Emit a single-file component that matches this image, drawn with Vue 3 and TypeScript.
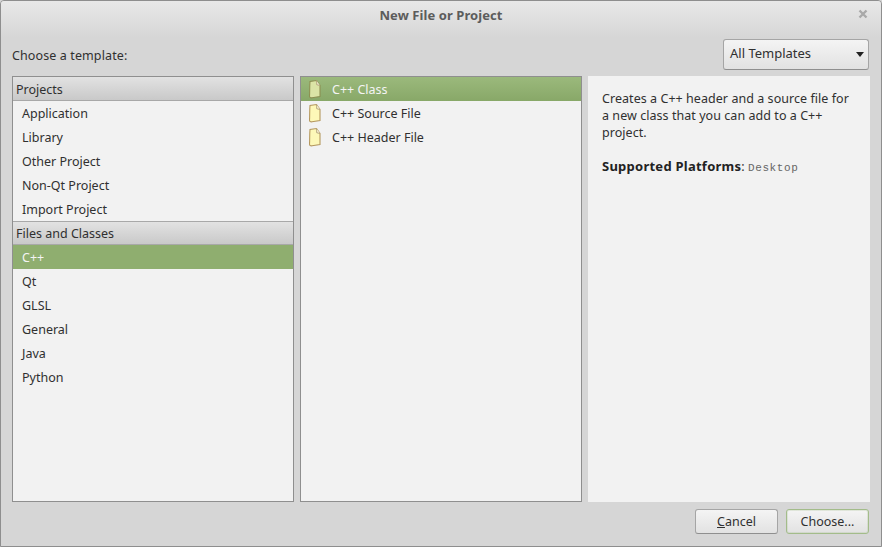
<script setup lang="ts">
const projects = ['Application', 'Library', 'Other Project', 'Non-Qt Project', 'Import Project']
const classes = ['C++', 'Qt', 'GLSL', 'General', 'Java', 'Python']
const files = ['C++ Class', 'C++ Source File', 'C++ Header File']
</script>

<template>
  <div class="window">
    <header class="titlebar">
      <span class="title">New File or Project</span>
      <svg class="close" width="10" height="10" viewBox="0 0 10 10">
        <path d="M1.5 1.500 8.500 8.500M8.500 1.500 1.500 8.500" stroke="#a9a9a9" stroke-width="2.400" fill="none" />
      </svg>
    </header>
    <div class="top">
      <span class="choose">Choose a template:</span>
      <div class="combo">
        <span>All Templates</span>
        <i class="arrow"></i>
      </div>
    </div>
    <div class="panes">
      <div class="pane list">
        <div class="group first">Projects</div>
        <div v-for="p in projects" :key="p" class="item">{{ p }}</div>
        <div class="group">Files and Classes</div>
        <div v-for="c in classes" :key="c" class="item" :class="{ selected: c === 'C++' }">{{ c }}</div>
      </div>
      <div class="pane list">
        <div v-for="(f, i) in files" :key="f" class="file" :class="{ selected: i === 0 }">
          <svg width="14" height="20" viewBox="0 0 14 20">
            <path d="M2 2.500C1.500 8 1.800 14 1.500 17c0 1.500 1 2 2.500 1.800L12 17.500V6.500L8.500 1.500z" :fill="i === 0 ? '#dbe4a6' : '#fdf8b8'" :stroke="i === 0 ? '#8c8f52' : '#b5985f'" stroke-width="1.100" />
            <path d="M8.500 1.500c.3 1.800.2 3.200.2 4.200 1.100.3 2.200.5 3.300.8" :fill="i === 0 ? '#eef0d4' : '#fbf6dc'" stroke="#b5a67c" stroke-width="1" />
          </svg>
          <span>{{ f }}</span>
        </div>
      </div>
      <div class="desc">
        <p>Creates a C++ header and a source file for a new class that you can add to a C++ project.</p>
        <p class="platforms"><b>Supported Platforms</b>: <span class="mono">Desktop</span></p>
      </div>
    </div>
    <footer class="footer">
      <button class="btn cancel"><u>C</u>ancel</button>
      <button class="btn choose-btn">Choose...</button>
    </footer>
  </div>
</template>

<style>
html, body { margin: 0; padding: 0; background: #d6d6d6; }
</style>

<style scoped>
.window {
  box-sizing: border-box;
  width: 882px;
  height: 547px;
  display: flex;
  flex-direction: column;
  background: #d6d6d6;
  border: 1px solid #8e8e8e;
  border-radius: 4px 4px 0 0;
  font-family: "Noto Sans", "Open Sans", sans-serif;
  font-size: 12.5px;
  color: #303030;
  overflow: hidden;
}
.titlebar {
  box-sizing: border-box;
  height: 36px;
  flex: none;
  display: flex;
  align-items: center;
  justify-content: center;
  padding-bottom: 9px;
  position: relative;
  background: linear-gradient(#e8e8e8, #d6d6d6);
}
.title { font-weight: 700; font-size: 13px; letter-spacing: 0.08px; color: #5c5c5c; }
.close { position: absolute; right: 13px; top: 8px; }
.top {
  box-sizing: border-box;
  height: 39px;
  flex: none;
  display: flex;
  align-items: center;
  justify-content: space-between;
  padding: 0 12px 0 11px;
}
.choose { letter-spacing: 0.11px; margin-top: -2px; }
.combo {
  box-sizing: border-box;
  width: 146px;
  height: 31px;
  margin-top: -5px;
  display: flex;
  align-items: center;
  justify-content: space-between;
  padding: 0 4px 0 6px;
  font-size: 13px;
  border: 1px solid #a5a5a5;
  border-bottom-color: #8f8f8f;
  border-radius: 3px;
  background: linear-gradient(#f4f4f4, #e2e2e2);
}
.combo span { margin-top: -2px; }
.arrow {
  width: 0;
  height: 0;
  border-left: 4.500px solid transparent;
  border-right: 4.500px solid transparent;
  border-top: 5px solid #222;
  margin-top: 1px;
}
.panes {
  flex: none;
  height: 426px;
  display: grid;
  grid-template-columns: 282px 282px 282px;
  gap: 6px;
  padding-left: 11px;
}
.pane {
  box-sizing: border-box;
  background: #f2f2f2;
  border: 1px solid #8f8f8f;
}
.group {
  box-sizing: border-box;
  height: 24px;
  line-height: 23px;
  padding-left: 3px;
  background: linear-gradient(#e2e2e2, #c9c9c9);
  border-top: 1px solid #a8a8a8;
  border-bottom: 1px solid #a8a8a8;
}
.group.first { border-top: 0; line-height: 25px; }
.item {
  height: 24px;
  line-height: 26px;
  padding-left: 9px;
}
.selected {
  background: #8fae6f;
  color: #f4f4f4;
}
.file {
  height: 24px;
  display: flex;
  align-items: center;
  padding-left: 7px;
  gap: 10px;
}
.file.selected {
  background: linear-gradient(#9bb97c, #88a868);
}
.desc {
  box-sizing: border-box;
  background: #f2f2f2;
  padding: 14px 14px;
  line-height: 17px;
  letter-spacing: 0.05px;
}
.desc p { margin: 0; }
.platforms { margin-top: 17px !important; }
.desc b { color: #222; font-size: 13px; letter-spacing: 0.25px; }
.mono { font-family: "Liberation Mono", monospace; font-size: 11px; letter-spacing: 0.6px; color: #666; }
.footer {
  flex: 1;
  display: flex;
  justify-content: flex-end;
  gap: 8px;
  padding: 7px 12px 0 0;
}
.btn {
  box-sizing: border-box;
  height: 25px;
  padding: 0;
  font: inherit;
  color: #303030;
  border: 1px solid #a5a5a5;
  border-bottom-color: #8f8f8f;
  border-radius: 3px;
  background: linear-gradient(#f4f4f4, #e2e2e2);
}
.cancel { width: 83px; }
.choose-btn { width: 83px; border: 1px solid #a3bc8a; box-shadow: inset 0 0 0 1px rgba(163, 188, 138, .25); }
</style>
